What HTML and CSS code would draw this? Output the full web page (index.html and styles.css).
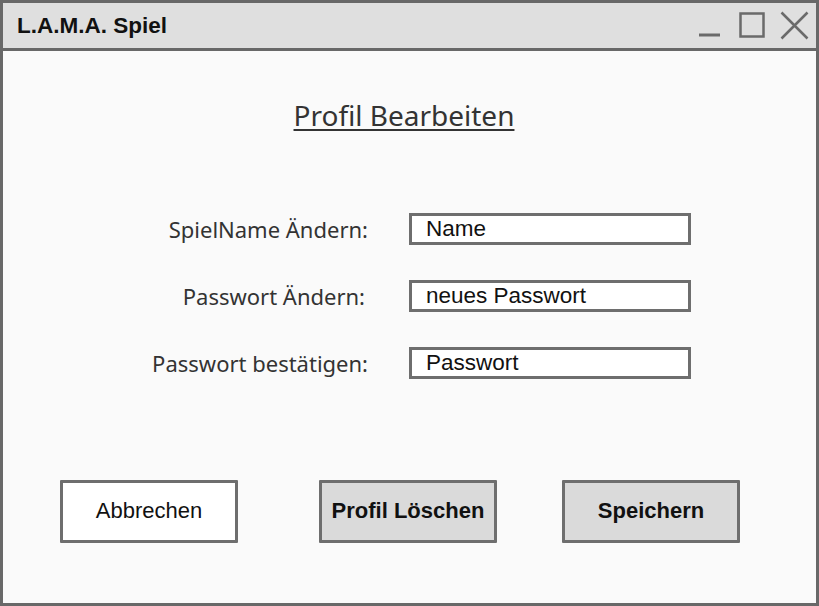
FILE: index.html
```html
<!DOCTYPE html>
<html lang="de">
<head>
<meta charset="utf-8">
<title>L.A.M.A. Spiel</title>
<link rel="stylesheet" href="styles.css">
</head>
<body>
<div class="window">
  <div class="titlebar">
    <span class="app-name">L.A.M.A. Spiel</span>
    <div class="controls">
      <svg class="ctl ctl-min" width="24" height="30" viewBox="0 0 24 30"><line x1="1" y1="24" x2="22" y2="24" stroke="#6a6a6a" stroke-width="3"/></svg>
      <svg class="ctl ctl-max" width="27" height="30" viewBox="0 0 27 30"><rect x="1.5" y="2.5" width="23" height="23" fill="none" stroke="#6a6a6a" stroke-width="2.5"/></svg>
      <svg class="ctl ctl-close" width="29" height="30" viewBox="0 0 29 30"><path d="M1.5 1.5 L27.5 27.5 M27.5 1.5 L1.5 27.5" stroke="#6a6a6a" stroke-width="2.5" fill="none"/></svg>
    </div>
  </div>
  <div class="content">
    <h1 class="heading">Profil Bearbeiten</h1>
    <div class="form">
      <label class="label">SpielName Ändern:</label>
      <div class="field">Name</div>
      <label class="label label-pw">Passwort Ändern:</label>
      <div class="field">neues Passwort</div>
      <label class="label">Passwort bestätigen:</label>
      <div class="field">Passwort</div>
    </div>
    <div class="actions">
      <button class="btn btn-cancel">Abbrechen</button>
      <button class="btn btn-primary btn-delete">Profil Löschen</button>
      <button class="btn btn-primary btn-save">Speichern</button>
    </div>
  </div>
</div>
</body>
</html>
```
FILE: styles.css
```css
html, body {
  margin: 0;
  padding: 0;
}
body {
  width: 819px;
  height: 606px;
  overflow: hidden;
  background: #fafafa;
}
.window {
  box-sizing: border-box;
  width: 819px;
  height: 606px;
  border: 3px solid #686868;
  background: #fafafa;
  display: flex;
  flex-direction: column;
}
.titlebar {
  height: 45px;
  flex: 0 0 45px;
  background: #dfdfdf;
  border-bottom: 3px solid #686868;
  display: flex;
  align-items: center;
  justify-content: space-between;
  padding: 0 7px 0 14px;
}
.app-name {
  font-family: "Liberation Sans", Arial, sans-serif;
  font-weight: bold;
  font-size: 22.5px;
  color: #111;
  margin-top: 0;
}
.controls {
  display: flex;
  align-items: flex-start;
  height: 30px;
  margin-top: 1px;
}
.ctl {
  display: block;
}
.ctl-min { margin-right: 17px; }
.ctl-max { margin-right: 14px; }
.content {
  flex: 1;
  display: flex;
  flex-direction: column;
}
.heading {
  margin: 46px 0 0 0;
  padding-right: 11px;
  text-align: center;
  font-family: "Noto Sans", sans-serif;
  font-weight: normal;
  font-size: 28px;
  line-height: 36px;
  color: #333;
  text-decoration: underline;
  text-decoration-thickness: 1.5px;
  text-underline-offset: 3px;
}
.form {
  margin-top: 80px;
  display: grid;
  grid-template-columns: 365px 282px;
  column-gap: 41px;
  row-gap: 35px;
  align-items: center;
}
.label {
  text-align: right;
  font-family: "Noto Sans", sans-serif;
  font-size: 22px;
  color: #333;
}
.label-pw {
  padding-right: 3px;
}
.field {
  box-sizing: border-box;
  height: 32px;
  border: 3px solid #6e6e6e;
  background: #fff;
  padding: 0 0 0 14px;
  display: flex;
  align-items: center;
  font-family: "Liberation Sans", Arial, sans-serif;
  font-size: 22.5px;
  color: #111;
}
.actions {
  margin-top: 101px;
  padding-left: 57px;
  display: flex;
}
.btn {
  box-sizing: border-box;
  width: 178px;
  height: 63px;
  border: 3px solid #6e6e6e;
  border-radius: 1px;
  font-family: "Liberation Sans", Arial, sans-serif;
  font-size: 22px;
  color: #111;
  padding: 0 0 1px 0;
}
.btn-cancel {
  background: #fff;
}
.btn-primary {
  background: #dadada;
  font-weight: bold;
}
.btn-delete {
  margin-left: 81px;
}
.btn-save {
  margin-left: 65px;
}
```
